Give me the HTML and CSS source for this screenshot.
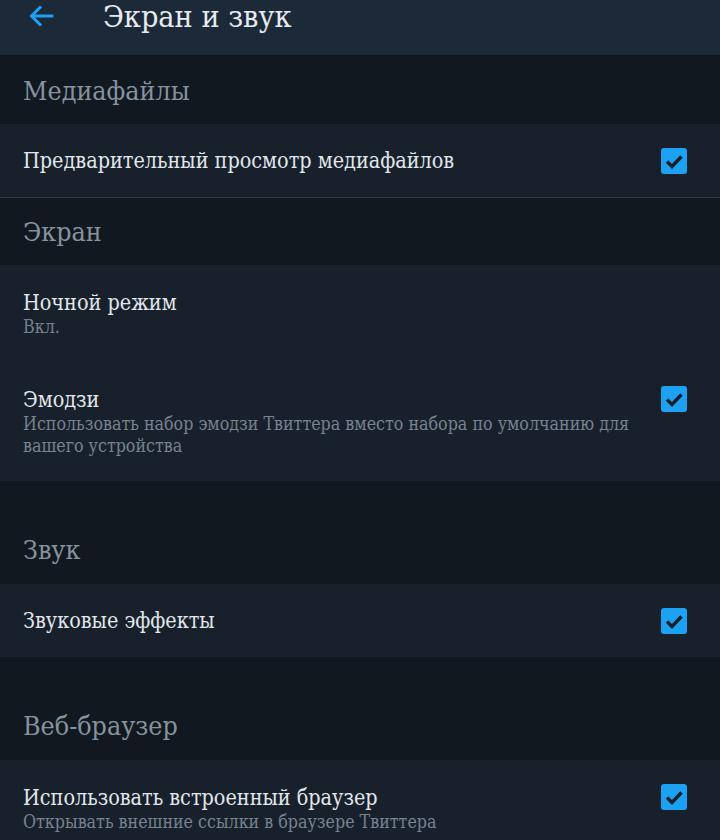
FILE: index.html
```html
<!DOCTYPE html>
<html lang="ru">
<head>
<meta charset="utf-8">
<link rel="stylesheet" href="styles.css">
</head>
<body>
<header class="topbar">
  <svg class="back" width="26" height="22" viewBox="0 0 26 22"><path d="M24 11H4M12 2.5L3.5 11 12 19.5" fill="none" stroke="#1da1f2" stroke-width="3" stroke-linecap="square"/></svg>
  <h1 class="title">Экран и звук</h1>
</header>

<div class="section section-first"><span>Медиафайлы</span></div>
<div class="group">
  <div class="row row-single row-divider">
    <div class="texts"><div class="row-title">Предварительный просмотр медиафайлов</div></div>
    <span class="check"></span>
  </div>
</div>

<div class="section"><span>Экран</span></div>
<div class="group">
  <div class="row row-multi">
    <div class="texts">
      <div class="row-title">Ночной режим</div>
      <div class="row-sub">Вкл.</div>
    </div>
  </div>
  <div class="row row-multi">
    <div class="texts">
      <div class="row-title">Эмодзи</div>
      <div class="row-sub">Использовать набор эмодзи Твиттера вместо набора по умолчанию для вашего устройства</div>
    </div>
    <span class="check"></span>
  </div>
</div>

<div class="section section-tall"><span>Звук</span></div>
<div class="group">
  <div class="row row-single">
    <div class="texts"><div class="row-title">Звуковые эффекты</div></div>
    <span class="check"></span>
  </div>
</div>

<div class="section section-tall"><span>Веб-браузер</span></div>
<div class="group">
  <div class="row row-multi">
    <div class="texts">
      <div class="row-title">Использовать встроенный браузер</div>
      <div class="row-sub">Открывать внешние ссылки в браузере Твиттера</div>
    </div>
    <span class="check"></span>
  </div>
</div>
</body>
</html>
```
FILE: styles.css
```css
html, body {
  margin: 0;
  padding: 0;
  background: #111820;
}
body {
  font-family: "DejaVu Serif Condensed", "DejaVu Serif", serif;
  width: 720px;
  height: 840px;
  overflow: hidden;
}
.topbar {
  height: 55px;
  background: #1c2938;
  display: flex;
  align-items: flex-start;
  box-sizing: border-box;
}
.back {
  margin: 5px 0 0 28px;
  flex: none;
}
.title {
  margin: 0 0 0 49px;
  font-weight: normal;
  font-size: 30.3px;
  line-height: 34px;
  color: #e6ebef;
}
.section {
  background: #111820;
  height: 67px;
  box-sizing: border-box;
  padding: 16px 23px 0;
  font-size: 26.6px;
  line-height: 36px;
  color: #86939f;
}
.section-first {
  height: 69px;
  padding-top: 18px;
}
.section-tall {
  height: 103px;
  padding-top: 51px;
}
.group {
  background: #17202b;
}
.row {
  display: flex;
  padding: 0 33px 0 23px;
  color: #e2e7eb;
}
.row-single {
  align-items: center;
  height: 73px;
  box-sizing: border-box;
}
.row-divider {
  height: 74px;
  border-bottom: 1px solid #303c48;
}
.row-multi {
  align-items: flex-start;
  padding-top: 25px;
  padding-bottom: 24px;
}
.texts {
  flex: 1;
  min-width: 0;
}
.row-title {
  font-size: 21.4px;
  line-height: 26px;
}
.row-sub {
  font-size: 17.7px;
  line-height: 22px;
  color: #77838f;
  padding-right: 20px;
}
.row-multi .check {
  margin-top: -1px;
}
.check {
  flex: none;
  width: 26px;
  height: 26px;
  border-radius: 3px;
  background: #1da1f2 url("data:image/svg+xml;utf8,<svg xmlns='http://www.w3.org/2000/svg' width='26' height='26' viewBox='0 0 26 26'><path d='M6 13.5l5 5 9.5-10' fill='none' stroke='%2317202b' stroke-width='3.4'/></svg>") no-repeat center;
}
```
